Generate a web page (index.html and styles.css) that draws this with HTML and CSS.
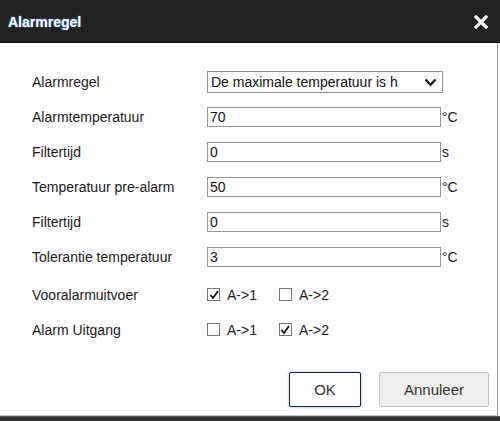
FILE: index.html
```html
<!DOCTYPE html>
<html>
<head>
<meta charset="utf-8">
<link rel="stylesheet" href="styles.css">
</head>
<body>
<div class="dialog">
  <header class="titlebar">
    <span class="title">Alarmregel</span>
    <svg class="close" width="14" height="14" viewBox="0 0 14 14"><path d="M2 2 L12 12 M12 2 L2 12" stroke="#fff" stroke-width="3.2" stroke-linecap="square"/></svg>
  </header>
  <div class="content">
    <div class="form">
      <div class="row">
        <span class="label">Alarmregel</span>
        <div class="selectwrap">
          <select class="select"><option>De maximale temperatuur is hoger dan de alarmtemperatuur</option></select>
          <svg class="chev" width="13" height="9" viewBox="0 0 13 9"><path d="M1.5 1.5 L6.5 6.8 L11.5 1.5" fill="none" stroke="#111" stroke-width="2.2"/></svg>
        </div>
      </div>
      <div class="row">
        <span class="label">Alarmtemperatuur</span>
        <div class="field"><input class="input" type="text" value="70"><span class="unit">°C</span></div>
      </div>
      <div class="row">
        <span class="label">Filtertijd</span>
        <div class="field"><input class="input" type="text" value="0"><span class="unit">s</span></div>
      </div>
      <div class="row">
        <span class="label">Temperatuur pre-alarm</span>
        <div class="field"><input class="input" type="text" value="50"><span class="unit">°C</span></div>
      </div>
      <div class="row">
        <span class="label">Filtertijd</span>
        <div class="field"><input class="input" type="text" value="0"><span class="unit">s</span></div>
      </div>
      <div class="row">
        <span class="label">Tolerantie temperatuur</span>
        <div class="field"><input class="input" type="text" value="3"><span class="unit">°C</span></div>
      </div>
      <div class="row checkrow first">
        <span class="label">Vooralarmuitvoer</span>
        <div class="checks">
          <span class="check"><span class="box"><svg width="10" height="10" viewBox="0 0 10 10"><path d="M1.5 5 L4 8 L9 1" fill="none" stroke="#111" stroke-width="1.8"/></svg></span>A-&gt;1</span>
          <span class="check"><span class="box"></span>A-&gt;2</span>
        </div>
      </div>
      <div class="row checkrow">
        <span class="label">Alarm Uitgang</span>
        <div class="checks">
          <span class="check"><span class="box"></span>A-&gt;1</span>
          <span class="check"><span class="box"><svg width="10" height="10" viewBox="0 0 10 10"><path d="M1.5 5 L4 8 L9 1" fill="none" stroke="#111" stroke-width="1.8"/></svg></span>A-&gt;2</span>
        </div>
      </div>
    </div>
    <div class="actions">
      <button class="btn ok">OK</button>
      <button class="btn cancel">Annuleer</button>
    </div>
  </div>
  <div class="bottombar"></div>
</div>
</body>
</html>
```

FILE: styles.css
```css
* { box-sizing: border-box; }
html, body { margin: 0; padding: 0; background: #fff; }
body {
  width: 500px;
  height: 421px;
  overflow: hidden;
  font-family: "Liberation Sans", Arial, sans-serif;
  font-size: 14px;
  color: #1a1a1a;
}
.dialog {
  display: flex;
  flex-direction: column;
  height: 421px;
}
.titlebar {
  height: 43px;
  flex: none;
  background: #222;
  border-bottom: 1px solid #0e0e0e;
  display: flex;
  align-items: center;
  justify-content: space-between;
  padding: 1px 12px 0 8px;
}
.title {
  color: #fff;
  font-weight: bold;
  font-size: 14px;
  text-shadow: 0 0 2px #3a7bd5, 0 0 1px #3a7bd5;
}
.close { display: block; margin-top: 1px; }
.content {
  flex: none;
  height: 373px;
  margin-right: 2px;
  border-right: 1px solid #9a9a9a;
  border-bottom: 1px solid #c4c4c4;
  display: flex;
  flex-direction: column;
  padding: 21px 8px 0 32px;
}
.form {
  display: flex;
  flex-direction: column;
}
.row {
  height: 35px;
  display: grid;
  grid-template-columns: 175px auto;
  align-items: center;
}
.row.checkrow.first { margin-top: 3px; }
.label { white-space: nowrap; }
.selectwrap {
  position: relative;
  width: 236px;
  height: 22px;
}
.select {
  appearance: none;
  -webkit-appearance: none;
  width: 236px;
  height: 22px;
  border: 1px solid #8f8f8f;
  border-radius: 0;
  background: #fff;
  font-family: "Liberation Sans", Arial, sans-serif;
  font-size: 14px;
  color: #111;
  padding: 0 44px 0 3px;
  margin: 0;
  text-overflow: clip;
}
.chev {
  position: absolute;
  right: 6px;
  top: 7px;
}
.field {
  display: flex;
  align-items: center;
}
.input {
  width: 234px;
  height: 20px;
  border: 1px solid #969696;
  border-radius: 0;
  padding: 0 2px;
  margin: 0;
  font-family: "Liberation Sans", Arial, sans-serif;
  font-size: 14px;
  color: #111;
  outline: none;
}
.unit { margin-left: 1px; color: #1a1a1a; }
.checks {
  display: flex;
  align-items: center;
  gap: 22px;
}
.check {
  display: flex;
  align-items: center;
  gap: 7px;
  color: #1a1a1a;
}
.box {
  width: 13px;
  height: 13px;
  border: 1px solid #777;
  background: #fff;
  display: flex;
  align-items: center;
  justify-content: center;
}
.box svg { display: block; }
.actions {
  display: flex;
  justify-content: flex-end;
  gap: 18px;
  margin-top: 25px;
}
.btn {
  height: 35px;
  font-family: "Liberation Sans", Arial, sans-serif;
  font-size: 15px;
  color: #333;
  border-radius: 2px;
  margin: 0;
  padding: 0;
}
.btn.ok {
  width: 72px;
  background: #fff;
  border: 1px solid #222;
  box-shadow: 0 0 2px 1px #c9d9f3;
}
.btn.cancel {
  width: 110px;
  background: #eee;
  border: 1px solid #c5c5c5;
}
.bottombar {
  flex: 1;
  background: #333;
  border-top: 1px solid #555;
}
```
